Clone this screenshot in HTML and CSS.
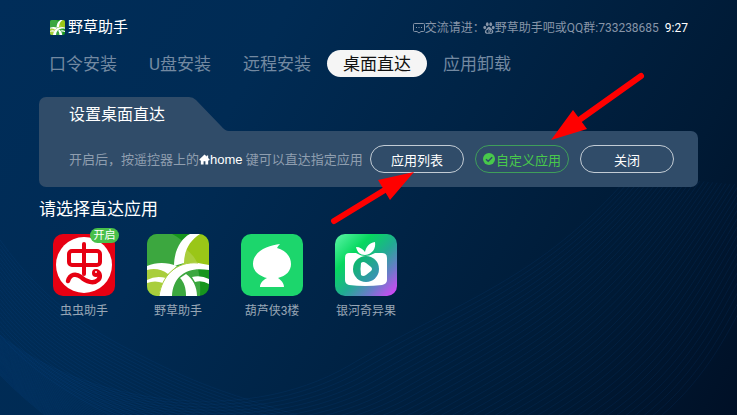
FILE: index.html
```
<!DOCTYPE html>
<html lang="zh-CN">
<head>
    <meta charset="UTF-8">
    <title>野草助手</title>
    <link rel="stylesheet" href="styles.css">
</head>
<body>
    <svg class="waves" viewBox="0 0 737 415" preserveAspectRatio="none" aria-hidden="true"></svg>

    <div class="page">
        <header class="header">
            <div class="logo">
                <svg class="logo-icon" viewBox="0 0 62 62"><use href="#grass"/></svg>
                <h1>野草助手</h1>
            </div>
            <div class="info">
                <svg class="info-chat" viewBox="0 0 12 12" fill="none" stroke="currentColor">
                    <path d="M1.500 1.500h9q1 0 1 1v6q0 1-1 1H8L6 11 4 9.500H1.500q-1 0-1-1v-6q0-1 1-1z"/>
                    <path d="M3 5.500h1M5.500 5.500h1M8 5.500h1"/>
                </svg>
                <span class="info-label">交流请进：</span>
                <svg class="info-paw" viewBox="0 0 24 24" fill="currentColor">
                    <ellipse cx="3.500" cy="11" rx="2.800" ry="3.600"/>
                    <ellipse cx="8.500" cy="4.500" rx="2.700" ry="3.800"/>
                    <ellipse cx="15.500" cy="4.500" rx="2.700" ry="3.800"/>
                    <ellipse cx="20.500" cy="11" rx="2.800" ry="3.600"/>
                    <path fill-rule="evenodd" d="M12 9.500c3 0 4 3 6.500 5.500 4 4 2 8.500-2 8.500H8c-4 0-6-4.500-2-8.500 2.500-2.500 3-5.500 6-5.500zM9 16c-3 0-3 5.500 0 5.500h2V14h-1v2zM13 16v4q0 1.500 1.500 1.500h3V16h-1.200v4h-2v-4z"/>
                </svg>
                <span>野草助手吧或QQ群:733238685</span>
                <time class="clock">9:27</time>
            </div>
        </header>

        <nav class="nav">
            <button type="button">口令安装</button>
            <button type="button">U盘安装</button>
            <button type="button">远程安装</button>
            <button type="button" class="active">桌面直达</button>
            <button type="button">应用卸载</button>
        </nav>

        <section class="panel">
            <div class="panel-tab">
                <h2>设置桌面直达</h2>
                <svg class="panel-slope" viewBox="0 0 40 34"><path d="M0 0Q4 0 7 3L32 29Q36 34 40 34H0z"/></svg>
            </div>
            <div class="panel-body">
                <p class="tip">开启后，按遥控器上的<svg class="tip-home" viewBox="0 0 12 12" fill="currentColor"><path d="M6 .5L.3 6 1 7h1v4.500h3V8h2v3.500h3V7h1l.7-1L10 4.300V1.500H8.500v1.300z"/></svg><b>home</b> 键可以直达指定应用</p>
                <div class="actions">
                    <button type="button">应用列表</button>
                    <button type="button" class="on"><svg class="check" viewBox="0 0 12 12"><circle cx="6" cy="6" r="6"/><path d="M3 6.200l2.200 2.100L9.200 4.300"/></svg>自定义应用</button>
                    <button type="button">关闭</button>
                </div>
            </div>
        </section>

        <section class="apps">
            <h2>请选择直达应用</h2>
            <div class="app-list">
                <button type="button" class="app">
                    <svg class="app-icon" viewBox="0 0 62 62">
                        <rect width="62" height="62" fill="#e60012"/>
                        <circle cx="31" cy="31" r="28" fill="#fff"/>
                        <g fill="none" stroke="#e60012" stroke-width="4" stroke-linecap="round">
                            <rect x="16" y="17" width="31" height="14" rx="3"/>
                            <path d="M31 10v30"/>
                            <path stroke-width="4.500" d="M15 47c2-7 8-8 13-4 5 5 13 7 17 3 3-3 2-7-1-8"/>
                        </g>
                        <circle cx="43" cy="39" r="4" fill="#e60012"/>
                        <circle cx="43" cy="38" r="1" fill="#fff"/>
                    </svg>
                    <span class="badge">开启</span>
                    <span class="app-name">虫虫助手</span>
                </button>
                <button type="button" class="app">
                    <svg class="app-icon" viewBox="0 0 62 62">
                        <g id="grass">
                            <rect width="62" height="62" fill="#17951d"/>
                            <path d="M0 0h25C42 8 55 28 53 62H0z" fill="#3ca73f"/>
                            <path d="M52 0h10v31H36C36 18 42 5 52 0z" fill="#9ac617"/>
                            <path d="M39 15C45 20 49 25 51 31H36Q36 22 39 15z" fill="#a9ce3c"/>
                            <path d="M0 35q14-4 26 0L14 62H0z" fill="#a9ce3c"/>
                            <path d="M43 0h10C43 6 37 17 37 29l-10 3C27 18 33 5 43 0z" fill="#fff"/>
                            <path d="M0 32C9 28 20 28 30 32L21 40C15 35 7 34 0 36z" fill="#fff"/>
                            <path d="M0 46q9-5 19-2l-3 5Q8 46 0 49z" fill="#fff"/>
                            <path d="M12 62C15 42 29 27 51 29l11 2v5C40 32 26 42 25 62z" fill="#fff"/>
                            <path d="M12 62C15 42 29 27 51 29" fill="none" stroke="#a9ce3c"/>
                            <path d="M33 44l6-4c7 5 11 13 11 22H39C39 54 37 48 33 44z" fill="#fff"/>
                            <path d="M45 43q9-2 17 2v5q-7-4-14-2z" fill="#fff"/>
                        </g>
                    </svg>
                    <span class="app-name">野草助手</span>
                </button>
                <button type="button" class="app">
                    <svg class="app-icon" viewBox="0 0 62 62">
                        <rect width="62" height="62" fill="#1cd66c"/>
                        <path fill="#fff" d="M39 10C28 11 12 17 12 30c0 7 6 12 14 14-4 2-7 5-7 9h24c0-4-3-7-6-9 8-2 13-7 13-14 0-8-6-14-14-16q1-2 3-4z"/>
                    </svg>
                    <span class="app-name">葫芦侠3楼</span>
                </button>
                <button type="button" class="app">
                    <svg class="app-icon" viewBox="0 0 62 62">
                        <defs>
                            <linearGradient id="galaxy" x1="0" y1="0" x2="1" y2="1">
                                <stop offset="0" stop-color="#5df5a8"/>
                                <stop offset=".3" stop-color="#06d85f"/>
                                <stop offset=".55" stop-color="#22aa94"/>
                                <stop offset=".75" stop-color="#6a7cc8"/>
                                <stop offset="1" stop-color="#e63cff"/>
                            </linearGradient>
                            <linearGradient id="lens" x1="0" y1="0" x2="1" y2="1">
                                <stop offset=".2" stop-color="#0fb571"/>
                                <stop offset="1" stop-color="#438bc4"/>
                            </linearGradient>
                        </defs>
                        <rect width="62" height="62" fill="url(#galaxy)"/>
                        <path fill="#fff" d="M14 19h7q9 6 19 0h7q5 0 5 5v22q0 4-5 5-17 2-33 0-4-1-4-5V24q0-5 4-5z"/>
                        <circle cx="31" cy="35" r="13" fill="url(#lens)"/>
                        <path fill="#fff" d="M26 29q2-2 5 0l5 4q2 2 0 4l-5 4q-3 2-5 0-1-6 0-12z"/>
                        <path fill="#fff" d="M30 21C25 21 22 18 21 13c4 0 7 2 9 5 1-5 4-9 10-10 1 6-2 12-10 13z"/>
                    </svg>
                    <span class="app-name">银河奇异果</span>
                </button>
            </div>
        </section>

        <svg class="arrows" viewBox="0 0 737 415" aria-hidden="true">
            <path class="arrow-line" d="M641 76L575 123M334 221L388 188"/>
            <path class="arrow-head" d="M551 140L573 110 587 129zM414 172L378 180 390 200z"/>
        </svg>
    </div>

    <script src="waves.js"></script>
</body>
</html>
```
FILE: styles.css
```
/* reset css */
* {
    box-sizing: border-box;
}
body,h1,h2,p {
    margin: 0;
    font-weight: normal;
}
body {
    position: relative;
    min-height: 100vh;
    overflow-x: hidden;
    font-family: Roboto, "Noto Sans CJK SC", sans-serif;
    color: #fff;
    background: linear-gradient(120deg, #002d59 0%, #002b54 30%, #002345 55%, #001a35 80%, #001026 100%);
}
button {
    margin: 0;
    padding: 0;
    border: none;
    font-family: inherit;
    color: inherit;
    background: none;
    white-space: nowrap;
    cursor: pointer;
}
/* background lines */
.waves {
    position: absolute;
    left: 0;
    top: 0;
    width: 100%;
    height: 100%;
}
.waves path {
    fill: none;
    stroke: #1565b8;
    stroke-width: 1;
    stroke-opacity: .1;
}
/* page */
.page {
    position: relative;
    padding: 17px 39px 0;
}
.header {
    display: flex;
    justify-content: space-between;
    align-items: center;
    height: 20px;
    padding: 0 10px 0 11px;
}
.logo {
    display: flex;
    align-items: center;
    gap: 3px;
}
.logo h1 {
    font-size: 15px;
    line-height: 20px;
}
.logo-icon {
    width: 15px;
    height: 15px;
    border-radius: 2px;
}
.info {
    display: flex;
    align-items: center;
    padding-top: 2px;
    font-size: 12px;
    line-height: 20px;
    color: #8795a8;
}
.info-chat,
.info-paw {
    width: 12px;
    height: 12px;
}
.info-label {
    margin-right: -2px;
}
.clock {
    margin-left: 6px;
    color: #fff;
}
/* nav */
.nav {
    display: flex;
    margin: 13px 0 0 -6px;
}
.nav button {
    padding: 2px 16px 0;
    border-radius: 14px;
    font-size: 17px;
    line-height: 25px;
    color: #7389a1;
}
.nav .active {
    color: #111;
    background: #f5f5f5;
}
/* panel */
.panel {
    margin-top: 20px;
}
.panel-tab {
    display: flex;
    height: 34px;
}
.panel-tab h2 {
    padding: 2px 24px 0 30px;
    border-top-left-radius: 7px;
    font-size: 16px;
    line-height: 32px;
    background: #304c69;
}
.panel-slope {
    width: 40px;
    height: 34px;
    fill: #304c69;
}
.panel-body {
    display: flex;
    justify-content: space-between;
    align-items: center;
    padding: 14px 24px 14px 30px;
    border-radius: 0 7px 7px 7px;
    background: #304c69;
}
.tip {
    padding-top: 2px;
    font-size: 13px;
    line-height: 26px;
    color: #8f9eaf;
    white-space: nowrap;
}
.tip b {
    font-family: "Liberation Sans", sans-serif;
    font-weight: normal;
    color: #fff;
}
.tip-home {
    width: 11px;
    height: 11px;
    vertical-align: -1px;
    color: #fff;
}
.actions {
    display: flex;
    gap: 11px;
}
.actions button {
    display: flex;
    justify-content: center;
    align-items: center;
    gap: 1px;
    width: 94px;
    height: 28px;
    border: 1px solid #c3ccd5;
    border-radius: 14px;
    font-size: 13px;
}
.actions .on {
    border-color: #3f9e5a;
    color: #48c94b;
}
.check {
    width: 12px;
    height: 12px;
    fill: #48c94b;
}
.check path {
    fill: none;
    stroke: #304c69;
    stroke-width: 1.5;
}
/* apps */
.apps {
    margin-top: 10px;
}
.apps h2 {
    font-size: 17px;
    line-height: 24px;
}
.app-list {
    display: flex;
    gap: 32px;
    padding: 13px 14px 0;
}
.app {
    position: relative;
    width: 62px;
}
.app-icon {
    display: block;
    width: 62px;
    height: 62px;
    border-radius: 10px;
}
.app-name {
    display: block;
    margin-top: 6px;
    font-size: 12px;
    line-height: 18px;
    color: #98a6b5;
}
.badge {
    position: absolute;
    left: 37px;
    top: -6px;
    width: 29px;
    border-radius: 8px;
    font-size: 11px;
    line-height: 15px;
    background: #48c04a;
}
/* arrows over the buttons */
.arrows {
    position: absolute;
    left: 0;
    top: 0;
    width: 737px;
    height: 415px;
    pointer-events: none;
}
.arrow-line {
    fill: none;
    stroke: #f00;
    stroke-width: 6;
    stroke-linecap: round;
}
.arrow-head {
    fill: #f00;
}
```
FILE: waves.js
```
//在两条曲线之间插值，画出一组细线
function drawWaves(svg, from, to, count) {
    for (var i = 0; i < count; i++) {
        var t = i / (count - 1);
        var p = from.map(function (v, k) {
            return v + (to[k] - v) * t;
        });
        var path = document.createElementNS('http://www.w3.org/2000/svg', 'path');
        path.setAttribute('d', 'M' + p.slice(0, 2) + 'C' + p.slice(2, 8) + 'S' + p.slice(8, 12));
        svg.appendChild(path);
    }
}

var waves = document.querySelector('.waves');
drawWaves(waves,
    [0, 335, 80, 400, 240, 430, 350, 365, 540, 280, 630, 175],
    [0, 375, 140, 520, 400, 560, 560, 480, 720, 340, 800, 190], 40);
drawWaves(waves,
    [0, 240, 50, 310, 100, 335, 150, 360, 230, 395, 330, 425],
    [0, 335, 30, 370, 70, 395, 120, 420, 200, 450, 260, 470], 22);
```
